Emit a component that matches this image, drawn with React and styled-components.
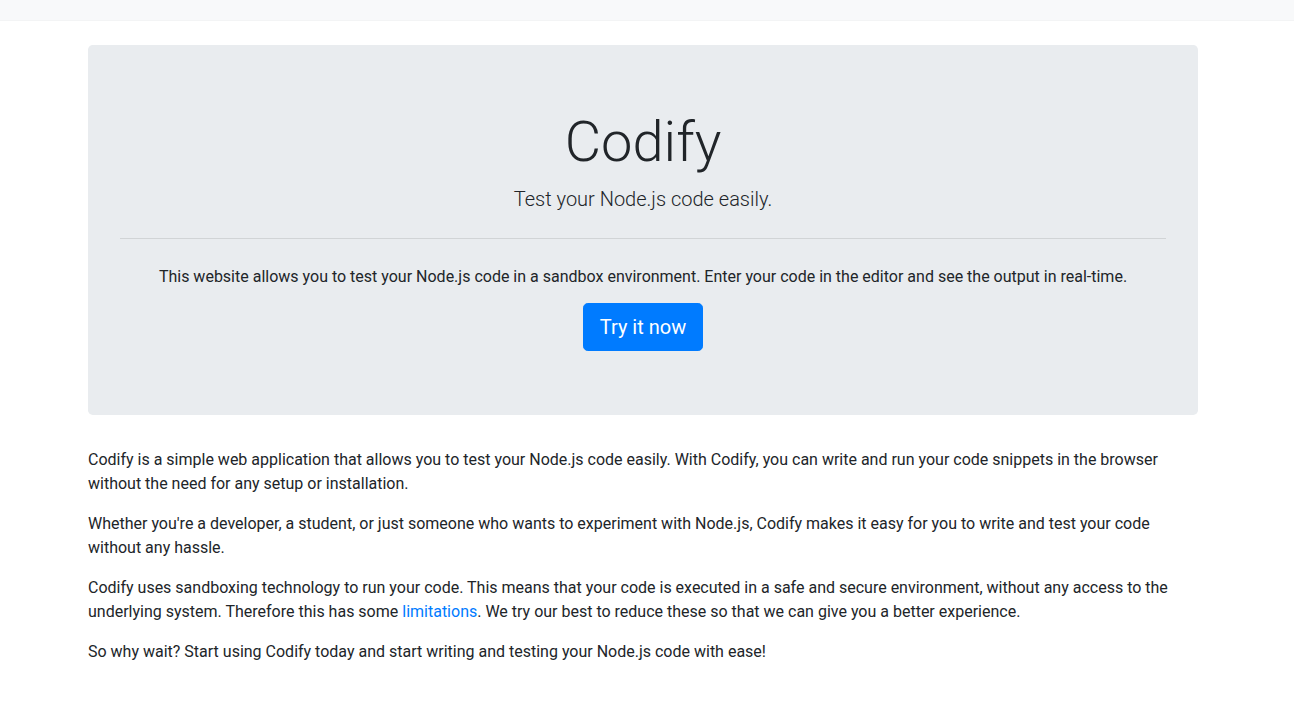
import React from "react";
import styled, { createGlobalStyle } from "styled-components";

const GlobalStyle = createGlobalStyle`
  *, *::before, *::after {
    box-sizing: border-box;
  }

  body {
    margin: 0;
    font-family: Roboto, "Liberation Sans", Arial, sans-serif;
    font-size: 16px;
    font-weight: 400;
    line-height: 1.5;
    color: #212529;
    background-color: #fff;
  }
`;

const Page = styled.div`
  padding-right: 8px;
`;

const TopBar = styled.nav`
  height: 21px;
  margin-right: -8px;
  background-color: #f8f9fa;
  border-bottom: 1px solid #f3f4f5;
`;

const Container = styled.main`
  width: 1140px;
  margin: 24px auto 0;
  padding: 0 15px;
`;

const Jumbotron = styled.section`
  display: flex;
  flex-direction: column;
  align-items: center;
  text-align: center;
  padding: 64px 32px;
  margin-bottom: 33px;
  background-color: #e9ecef;
  border-radius: 4.8px;
`;

const HomeTitle = styled.h1`
  margin: 0 0 8px;
  font-size: 56px;
  font-weight: 300;
  line-height: 1.2;
`;

const Lead = styled.p`
  margin: 0;
  font-size: 20px;
  font-weight: 300;
  line-height: 1.5;
`;

const Divider = styled.hr`
  align-self: stretch;
  margin: 24px 0 0;
  border: 0;
  border-top: 1px solid rgba(0, 0, 0, 0.1);
`;

const Text = styled.p`
  margin: ${(p) => (p.$inJumbo ? "26px 0 14px" : "0 0 16px")};
  font-size: 16px;
  line-height: 24px;
`;

const Button = styled.a`
  display: inline-block;
  padding: 8px 16px;
  font-size: 20px;
  line-height: 1.5;
  color: #fff;
  background-color: #007bff;
  border: 1px solid #007bff;
  border-radius: 4.8px;
  text-decoration: none;
  cursor: pointer;
`;

const Link = styled.a`
  color: #007bff;
  text-decoration: none;
`;

const About = styled.div``;

export default function App() {
  return (
    <Page>
      <GlobalStyle />
      <TopBar />
      <Container>
        <Jumbotron>
          <HomeTitle>Codify</HomeTitle>
          <Lead>Test your Node.js code easily.</Lead>
          <Divider />
          <Text $inJumbo>
            This website allows you to test your Node.js code in a sandbox environment. Enter your code in the editor and see the output in real-time.
          </Text>
          <Button href="#">Try it now</Button>
        </Jumbotron>
        <About>
          <Text>
            Codify is a simple web application that allows you to test your Node.js code easily. With Codify, you can write and run your code snippets in the browser without the need for any setup or installation.
          </Text>
          <Text>
            Whether you're a developer, a student, or just someone who wants to experiment with Node.js, Codify makes it easy for you to write and test your code without any hassle.
          </Text>
          <Text>
            Codify uses sandboxing technology to run your code. This means that your code is executed in a safe and secure environment, without any access to the underlying system. Therefore this has some <Link href="#">limitations</Link>. We try our best to reduce these so that we can give you a better experience.
          </Text>
          <Text>
            So why wait? Start using Codify today and start writing and testing your Node.js code with ease!
          </Text>
        </About>
      </Container>
    </Page>
  );
}
